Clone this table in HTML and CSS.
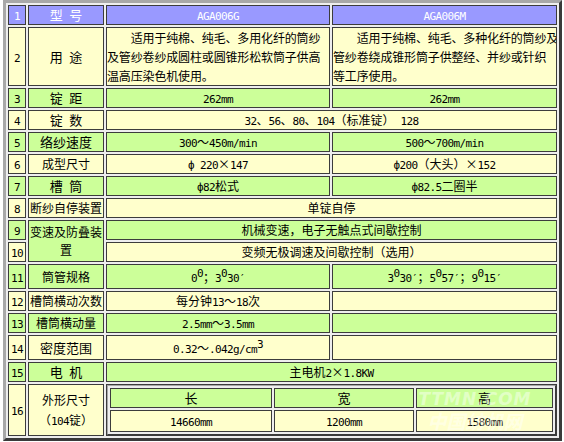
FILE: index.html
```html
<!DOCTYPE html>
<html>
<head>
<meta charset="utf-8">
<title>AGA006 规格</title>
<link rel="stylesheet" href="styles.css">
</head>
<body>
<table class="spec">
<colgroup><col class="c1"><col class="c2"><col class="c3"><col class="c4"></colgroup>
<tr class="hd">
<td class="n"><span class="m">1</span></td>
<td class="lb big">型&ensp;号</td>
<td><span class="m">AGA006G</span></td>
<td><span class="m">AGA006M</span></td>
</tr>
<tr class="y">
<td class="n"><span class="m">2</span></td>
<td class="lb big">用&ensp;途</td>
<td class="para">　　适用于纯棉、纯毛、多用化纤的筒纱<br>及管纱卷纱成圆柱或圆锥形松软筒子供高<br>温高压染色机使用。</td>
<td class="para">　　适用于纯棉、纯毛、多种化纤的筒纱及<br>管纱卷绕成锥形筒子供整经、并纱或针织<br>等工序使用。</td>
</tr>
<tr class="g">
<td class="n"><span class="m">3</span></td>
<td class="lb big">锭&ensp;距</td>
<td><span class="m">262mm</span></td>
<td><span class="m">262mm</span></td>
</tr>
<tr class="y">
<td class="n"><span class="m">4</span></td>
<td class="lb big">锭&ensp;数</td>
<td colspan="2"><span class="m">32</span>、<span class="m">56</span>、<span class="m">80</span>、<span class="m">104</span>（标准锭）<span class="m"> 128</span></td>
</tr>
<tr class="g">
<td class="n"><span class="m">5</span></td>
<td class="lb big">络纱速度</td>
<td><span class="m">300</span>～<span class="m">450m/min</span></td>
<td><span class="m">500</span>～<span class="m">700m/min</span></td>
</tr>
<tr class="y">
<td class="n"><span class="m">6</span></td>
<td class="lb">成型尺寸</td>
<td><span class="m">ф 220</span>×<span class="m">147</span></td>
<td><span class="m">ф200</span>（大头）×<span class="m">152</span></td>
</tr>
<tr class="g">
<td class="n"><span class="m">7</span></td>
<td class="lb big">槽&ensp;筒</td>
<td><span class="m">ф82</span>松式</td>
<td><span class="m">ф82.5</span>二圈半</td>
</tr>
<tr class="y">
<td class="n"><span class="m">8</span></td>
<td class="lb">断纱自停装置</td>
<td colspan="2">单锭自停</td>
</tr>
<tr class="g">
<td class="n"><span class="m">9</span></td>
<td class="lb" rowspan="2">变速及防叠装<br>置</td>
<td colspan="2">机械变速，电子无触点式间歇控制</td>
</tr>
<tr class="y">
<td class="n"><span class="m">10</span></td>
<td colspan="2">变频无极调速及间歇控制（选用）</td>
</tr>
<tr class="g tall">
<td class="n"><span class="m">11</span></td>
<td class="lb">筒管规格</td>
<td><span class="m">0<sup>0</sup></span>；<span class="m">3<sup>0</sup>30′</span></td>
<td><span class="m">3<sup>0</sup>30′</span>；<span class="m">5<sup>0</sup>57′</span>；<span class="m">9<sup>0</sup>15′</span></td>
</tr>
<tr class="y">
<td class="n"><span class="m">12</span></td>
<td class="lb">槽筒横动次数</td>
<td>每分钟<span class="m">13</span>～<span class="m">18</span>次</td>
<td></td>
</tr>
<tr class="g">
<td class="n"><span class="m">13</span></td>
<td class="lb">槽筒横动量</td>
<td><span class="m">2.5mm</span>～<span class="m">3.5mm</span></td>
<td></td>
</tr>
<tr class="y tall">
<td class="n"><span class="m">14</span></td>
<td class="lb big">密度范围</td>
<td><span class="m">0.32</span>～<span class="m">.042g/cm<sup>3</sup></span></td>
<td></td>
</tr>
<tr class="g">
<td class="n"><span class="m">15</span></td>
<td class="lb big">电&ensp;机</td>
<td colspan="2">主电机<span class="m">2</span>×<span class="m">1.8KW</span></td>
</tr>
<tr class="y">
<td class="n"><span class="m">16</span></td>
<td class="lb two">外形尺寸<br>（<span class="m">104</span>锭）</td>
<td colspan="2" class="nest">
<table class="dims">
<colgroup><col class="d1"><col class="d2"><col class="d3"></colgroup>
<tr class="g"><td class="big">长</td><td class="big">宽</td><td class="big">高</td></tr>
<tr class="y"><td class="val"><span class="m">14660mm</span></td><td class="val"><span class="m">1200mm</span></td><td class="val"><span class="m">1580mm</span></td></tr>
</table>
</td>
</tr>
</table>
<div class="mark" aria-hidden="true"><span class="mk1">TTMN.COM</span><span class="mk2">中国纺机网</span></div>
</body>
</html>
```

FILE: styles.css
```css
html, body {
  margin: 0;
  padding: 0;
  background: #ffffff;
}

body {
  position: relative;
  font-family: "Noto Sans CJK SC", "Noto Sans CJK JP", sans-serif;
  font-size: 12px;
  color: #000000;
}

.spec {
  margin: 0 0 0 3px;
  width: 559px;
  table-layout: fixed;
  border-collapse: separate;
  border-spacing: 2px;
  border: 3px solid;
  border-color: #a8a8a8 #3a3a3a #3a3a3a #a8a8a8;
  background: #eeeeee;
}

.c1 { width: 18px; }
.c2 { width: 76px; }
.c3 { width: 224px; }
.c4 { width: 225px; }

.spec td {
  border: 1px solid #3c3c3c;
  padding: 0;
  height: 18px;
  line-height: 18px;
  text-align: center;
  vertical-align: middle;
  white-space: nowrap;
  overflow: hidden;
}

.hd td {
  background: #9999ff;
  color: #ffffff;
}

.y > td { background: #ffffcc; }
.g > td { background: #ccff99; }

.m {
  font-family: "DejaVu Sans Mono", monospace;
  font-size: 11px;
  line-height: 11px;
  letter-spacing: -0.62px;
}

.lb { font-size: 12px; }
.big { font-size: 13px; }

.spec td.para {
  text-align: left;
  line-height: 19px;
  letter-spacing: -0.15px;
}

.spec .tall > td {
  height: 23px;
  line-height: 23px;
}

sup {
  font-size: 11px;
  line-height: 0;
  vertical-align: 5px;
}

.spec td.two { line-height: 20px; }

.spec td.nest {
  padding: 0;
  background: #ffffcc;
}

.dims {
  width: 100%;
  table-layout: fixed;
  border-collapse: separate;
  border-spacing: 2px;
  border: 1px solid;
  border-color: #a8a8a8 #3a3a3a #3a3a3a #a8a8a8;
  background: #eeeeee;
}

.d1 { width: 162px; }
.d2 { width: 140px; }

.spec .dims td { height: 18px; line-height: 18px; }
.spec .dims td.val { height: 20px; line-height: 20px; }

.mark {
  position: absolute;
  left: 418px;
  top: 389px;
  display: flex;
  flex-direction: column;
  align-items: center;
  width: 114px;
  color: rgba(255, 255, 255, 0.45);
  font-weight: bold;
  font-style: italic;
  pointer-events: none;
}

.mk1 {
  font-family: "DejaVu Sans", sans-serif;
  font-size: 17px;
  line-height: 20px;
  letter-spacing: 1px;
}

.mk2 {
  font-size: 19px;
  line-height: 24px;
}
```
